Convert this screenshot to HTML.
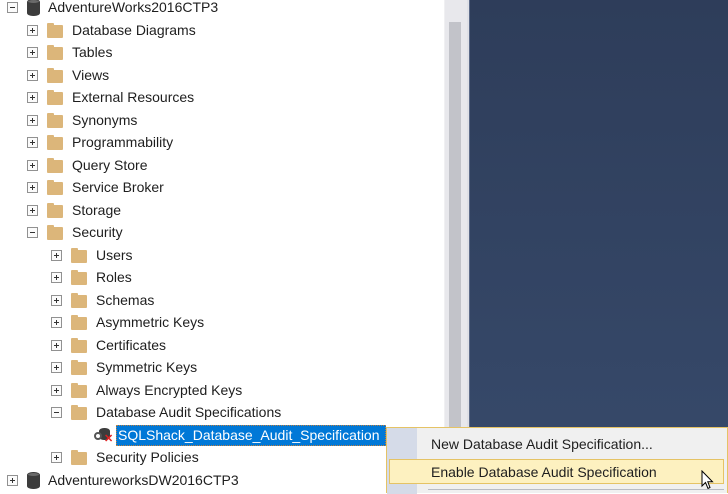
<!DOCTYPE html>
<html><head><style>
*{margin:0;padding:0;box-sizing:border-box}
body{width:728px;height:493px;overflow:hidden;background:#fff;position:relative;font-family:"Liberation Sans",sans-serif;font-size:14px;color:#1e1e1e}
.r{position:absolute;height:22px;line-height:22px;white-space:nowrap}
.ex{position:absolute;width:11px;height:11px;border:1px solid #919191;background:#fbfbfb}
.ex:before{content:"";position:absolute;left:2px;top:4px;width:5px;height:1px;background:#333}
.ex.p:after{content:"";position:absolute;left:4px;top:2px;width:1px;height:5px;background:#333}
.fo{position:absolute;width:16px;height:13px;background:#dcb67a;border-radius:1px}
.fo:before{content:"";position:absolute;left:0;top:-2px;width:7px;height:3px;background:#dcb67a;border-radius:1px 1px 0 0}
.db{position:absolute;width:13px;height:17px;background:#3c3c3c;border-radius:6px/3px}
.db:before{content:"";position:absolute;left:1px;top:1px;width:11px;height:3px;border-radius:50%;background:#6a6a6a}
.t{position:absolute}
</style></head><body>
<div style="position:absolute;left:444px;top:0;width:1px;height:493px;background:#f0f0f2"></div>
<div style="position:absolute;left:445px;top:0;width:22px;height:493px;background:#e8e8ec"></div>
<div style="position:absolute;left:449px;top:22px;width:12px;height:471px;background:#c2c3c9"></div>
<div style="position:absolute;left:467px;top:0;width:3px;height:493px;background:#dfe0e6"></div>
<div style="position:absolute;left:469px;top:0;width:259px;height:493px;background:linear-gradient(#2e3d5a,#374a6b);border-left:1px solid #5b6a88"></div>

<div id="tree"></div>
<script>
var rows=[
[0,'-','db','AdventureWorks2016CTP3'],
[1,'+','f','Database Diagrams'],[1,'+','f','Tables'],[1,'+','f','Views'],[1,'+','f','External Resources'],
[1,'+','f','Synonyms'],[1,'+','f','Programmability'],[1,'+','f','Query Store'],[1,'+','f','Service Broker'],
[1,'+','f','Storage'],[1,'-','f','Security'],
[2,'+','f','Users'],[2,'+','f','Roles'],[2,'+','f','Schemas'],[2,'+','f','Asymmetric Keys'],[2,'+','f','Certificates'],
[2,'+','f','Symmetric Keys'],[2,'+','f','Always Encrypted Keys'],[2,'-','f','Database Audit Specifications'],
[3,'','a','SQLShack_Database_Audit_Specification'],
[2,'+','f','Security Policies'],
[0,'+','db','AdventureworksDW2016CTP3']];
var h='';
rows.forEach(function(r,i){
 var cy=Math.round(7+22.5*i), L=r[0];
 var exX=[7,27,51,75][L], icX=[27,47,71,95][L], txX=[48,72,96,118][L];
 if(r[1]) h+='<div class="ex'+(r[1]=='+'?' p':'')+'" style="left:'+exX+'px;top:'+(cy-5)+'px"></div>';
 if(r[2]=='f') h+='<div class="fo" style="left:'+icX+'px;top:'+(cy-5)+'px"></div>';
 if(r[2]=='db') h+='<div class="db" style="left:'+icX+'px;top:'+(cy-8)+'px"></div>';
 if(r[2]=='a'){
  h+='<div style="position:absolute;left:'+(icX+4)+'px;top:'+(cy-7)+'px;width:11px;height:12px;background:#3c3c3c;border-radius:5px/3px"></div>';
  h+='<div style="position:absolute;left:'+(icX-1)+'px;top:'+(cy-3)+'px;width:8px;height:8px;border:2px solid #555;border-radius:50%;background:#fff"></div>';
  h+='<div style="position:absolute;left:'+(icX+9)+'px;top:'+(cy)+'px;color:#e02020;font-size:11px;line-height:9px;font-weight:bold">✕</div>';
  h+='<div style="position:absolute;left:116px;top:'+(cy-10)+'px;width:270px;height:21px;background:#0078d7;border:1px dotted #c08040"></div>';
  h+='<div class="r" style="left:'+txX+'px;top:'+(cy-11)+'px;color:#fff">'+r[3]+'</div>';
 } else h+='<div class="r" style="left:'+txX+'px;top:'+(cy-11)+'px">'+r[3]+'</div>';
});
document.getElementById('tree').innerHTML=h;
</script>

<div style="position:absolute;left:386px;top:427px;width:342px;height:66px;background:#f0f0f0;border:1px solid #e5c365;border-bottom:none">
 <div style="position:absolute;left:0;top:0;width:30px;height:66px;background:#d5dbe8"></div>
 <div class="r" style="left:44px;top:5px;color:#1e1e1e">New Database Audit Specification...</div>
 <div style="position:absolute;left:2px;top:31px;width:335px;height:25px;background:#fdf1c0;border:1px solid #e5c365"></div>
 <div class="r" style="left:44px;top:33px">Enable Database Audit Specification</div>
 <div style="position:absolute;left:41px;top:61px;width:296px;height:1px;background:#b8bcc4"></div>
 <svg style="position:absolute;left:314px;top:42px" width="14" height="22" viewBox="0 0 14 22"><path d="M1 1 L1 16 L4.5 12.5 L7 18.5 L9 17.5 L6.8 11.8 L11.5 11.8 Z" fill="#fff" stroke="#000" stroke-width="1"/></svg>
</div>
</body></html>
